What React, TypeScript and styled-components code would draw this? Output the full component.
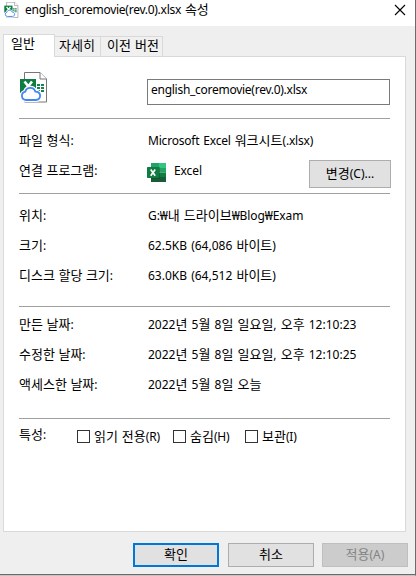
import React from "react";
import styled, { createGlobalStyle, css } from "styled-components";

const GlobalStyle = createGlobalStyle`
  * { box-sizing: border-box; }
  body { margin: 0; background: #f0f0f0; }
`;

const Dialog = styled.main`
  display: flex;
  flex-direction: column;
  width: 416px;
  height: 576px;
  overflow: hidden;
  background: #efefef;
  border-right: 1px solid #6b6b6b;
  border-bottom: 1px solid #c4c4c4;
  box-shadow: inset 0 -1px 0 #6b6b6b;
  color: #000;
  font: 12px/20px "Noto Sans", "Noto Sans CJK KR", sans-serif;
  word-spacing: 1px;
`;

const Line = styled.span<{ $track?: number }>`
  display: block;
  height: 20px;
  line-height: 20px;
  white-space: pre;
  letter-spacing: ${(p) => p.$track ?? 0}px;
`;

const Hangul = styled.span`
  font-family: "Noto Sans CJK KR", sans-serif;
  font-size: 13px;
  line-height: 1px;
  letter-spacing: 0;
`;

function Text({ children, track }: { children: string; track?: number }) {
  return (
    <Line $track={track}>
      {children.split(/([\uac00-\ud7a3]+)/).map((part, i) =>
        i % 2 ? <Hangul key={i}>{part}</Hangul> : part
      )}
    </Line>
  );
}

const TitleBar = styled.header`
  display: flex;
  align-items: flex-start;
  height: 26px;
  padding: 0 9px 0 4px;
  background: #fff;
`;

const TitleIcon = styled.div`
  height: 17px;
  margin-top: 2px;
`;

const TitleText = styled.div`
  flex: 1;
  padding-left: 6px;
`;

const CloseButton = styled.button`
  width: 12px;
  height: 12px;
  margin-top: 4px;
  padding: 0;
  border: 0;
  background: none;
`;

const Icon = styled.svg`
  display: block;
`;

const Tabs = styled.nav`
  display: flex;
  align-items: flex-end;
  height: 31px;
  padding-left: 3px;
`;

const Tab = styled.div<{ $width: number; $pad: number; $active?: boolean }>`
  width: ${(p) => p.$width}px;
  height: 21px;
  padding-left: ${(p) => p.$pad}px;
  border: 1px solid #d9d9d9;
  border-left: 0;
  background: #f0f0f0;
  ${(p) =>
    p.$active &&
    css`
      height: 23px;
      border-left: 1px solid #d9d9d9;
      border-bottom: 0;
      background: #fff;
    `}
`;

const TabLabel = styled.div`
  margin-top: -1px;
`;

const TabFill = styled.div`
  flex: 1;
  margin-right: 9px;
  border-bottom: 1px solid #d9d9d9;
`;

const Panel = styled.section`
  width: 403px;
  height: 475px;
  margin-left: 3px;
  padding: 0 15px;
  border: 1px solid #d9d9d9;
  border-top: 0;
  background: #fff;
`;

const Heading = styled.div`
  display: flex;
  align-items: flex-start;
  height: 61px;
  padding-top: 14px;
`;

const FileIconBox = styled.div`
  width: 128px;
  height: 32px;
  padding: 1px 0 0 1px;
`;

const NameField = styled.div`
  width: 243px;
  height: 26px;
  margin-top: 8px;
  padding-left: 3px;
  border: 1px solid #7a7a7a;
`;

const Group = styled.div<{ $height: number; $top: number }>`
  height: ${(p) => p.$height}px;
  width: 371px;
  padding-top: ${(p) => p.$top}px;
  border-top: 1px solid #a0a0a0;
`;

const Row = styled.div`
  display: flex;
  height: 30px;
`;

const Label = styled.div<{ $width?: number }>`
  flex: none;
  width: ${(p) => p.$width ?? 129}px;
  word-spacing: 0.4px;
`;

const AppIcon = styled.div`
  width: 27px;
  height: 20px;
  margin: 2px 0 0 -1px;
`;

const AppName = styled.div`
  flex: 1;
`;

const Button = styled.button<{ $primary?: boolean; $w?: number; $h?: number }>`
  display: flex;
  flex: none;
  align-items: center;
  justify-content: center;
  width: ${(p) => p.$w ?? 86}px;
  height: ${(p) => p.$h ?? 24}px;
  padding: 0;
  border: ${(p) => (p.$primary ? "2px solid #0078d7" : "1px solid #adadad")};
  background: #e1e1e1;
  color: #000;
  font: inherit;
  word-spacing: inherit;
  &:disabled {
    border-color: #bfbfbf;
    background: #ccc;
    color: #838383;
  }
`;

const ChangeSlot = styled.div`
  margin: -1px -1px 0 0;
`;

const Option = styled.div<{ $width: number }>`
  display: flex;
  width: ${(p) => p.$width}px;
  padding-top: 2px;
`;

const CheckBox = styled.span`
  width: 13px;
  height: 13px;
  margin: 3px 4px 0 0;
  border: 1px solid #333;
  background: #fff;
`;

const Footer = styled.footer`
  display: flex;
  justify-content: flex-end;
  padding: 11px 7px 0 0;
  gap: 8px;
`;

const PrimarySlot = styled.div`
  margin-right: 1px;
`;

function DriveSheetIcon({ width, height }: { width: number; height: number }) {
  return (
    <Icon width={width} height={height} viewBox="0 0 28 31">
      <path d="M4.5.5H20l6.5 6.5v23h-22z" fill="#fff" stroke="#777" strokeWidth="1" />
      <path d="M20 .5V7h6.5" fill="#fff" stroke="#777" strokeWidth="1" />
      <path d="M17 12h3v2h-3zM21 12h3v2h-3zM17 15h3v2h-3zM21 15h3v2h-3zM17 18h3v2h-3zM21 18h3v2h-3z" fill="#16834b" />
      <path d="M0 7h16v14H0z" fill="#107c41" />
      <path d="m4.5 9.5 7.5 9.5M12 9.5l-7.5 9.5" stroke="#fff" strokeWidth="2.6" />
      <path d="M5.8 28a4.2 4.2 0 0 1-.5-8.3c1.1-5 8.6-5.2 10-.1 6.2-.3 6.5 8.2.4 8.4z" fill="#fff" stroke="#fff" strokeWidth="4" />
      <path d="M5.8 28a4.2 4.2 0 0 1-.5-8.3c1.1-5 8.6-5.2 10-.1 6.2-.3 6.5 8.2.4 8.4z" fill="#fff" stroke="#4285f4" strokeWidth="1.8" />
    </Icon>
  );
}

function ExcelIcon() {
  return (
    <Icon width="19" height="19" viewBox="0 0 19 19">
      <path d="M4 0h8v5H4z" fill="#21a366" />
      <path d="M12 0h7v5h-7z" fill="#33c481" />
      <path d="M4 5h8v4.5H4z" fill="#107c41" />
      <path d="M12 5h7v4.5h-7z" fill="#21a366" />
      <path d="M4 9.5h8V19H4z" fill="#185c37" />
      <path d="M12 9.5h7V14h-7z" fill="#107c41" />
      <path d="M12 14h7v5h-7z" fill="#185c37" />
      <path d="M4 4h9v12H4z" fill="#0b3d25" opacity=".35" />
      <rect y="4" width="12" height="11" rx=".7" fill="#107c41" />
      <path d="m3.7 6.4 4.5 6.4M8.2 6.4l-4.5 6.4" stroke="#fff" strokeWidth="1.7" />
    </Icon>
  );
}

const sizes: [string, string, number][] = [
  ["위치:", "G:₩내 드라이브₩Blog₩Exam", -0.08],
  ["크기:", "62.5KB (64,086 바이트)", 0],
  ["디스크 할당 크기:", "63.0KB (64,512 바이트)", 0],
];

const dates: [string, string, number][] = [
  ["만든 날짜:", "2022년 5월 8일 일요일, 오후 12:10:23", 0],
  ["수정한 날짜:", "2022년 5월 8일 일요일, 오후 12:10:25", 0],
  ["액세스한 날짜:", "2022년 5월 8일 오늘", 0],
];

const InfoRows = ({ rows }: { rows: [string, string, number][] }) => (
  <>
    {rows.map(([label, value, track]) => (
      <Row key={label}>
        <Label><Text>{label}</Text></Label>
        <Text track={track}>{value}</Text>
      </Row>
    ))}
  </>
);

export default function App() {
  return (
    <>
      <GlobalStyle />
      <Dialog>
        <TitleBar>
          <TitleIcon><DriveSheetIcon width={15} height={16} /></TitleIcon>
          <TitleText><Text track={-0.27}>english_coremovie(rev.0).xlsx 속성</Text></TitleText>
          <CloseButton aria-label="닫기">
            <Icon width="12" height="12" viewBox="0 0 12 12">
              <path d="m1 1 10 10M11 1 1 11" stroke="#000" strokeWidth="1.1" />
            </Icon>
          </CloseButton>
        </TitleBar>
        <Tabs>
          <Tab $width={52} $pad={7} $active><TabLabel><Text>일반</Text></TabLabel></Tab>
          <Tab $width={46} $pad={4}><TabLabel><Text>자세히</Text></TabLabel></Tab>
          <Tab $width={62} $pad={6}><TabLabel><Text>이전 버전</Text></TabLabel></Tab>
          <TabFill />
        </Tabs>
        <Panel>
          <Heading>
            <FileIconBox><DriveSheetIcon width={28} height={31} /></FileIconBox>
            <NameField><Text track={-0.27}>english_coremovie(rev.0).xlsx</Text></NameField>
          </Heading>
          <Group $height={75} $top={12}>
            <Row>
              <Label><Text>파일 형식:</Text></Label>
              <Text track={-0.2}>Microsoft Excel 워크시트(.xlsx)</Text>
            </Row>
            <Row>
              <Label><Text>연결 프로그램:</Text></Label>
              <AppIcon><ExcelIcon /></AppIcon>
              <AppName><Text track={-0.1}>Excel</Text></AppName>
              <ChangeSlot>
                <Button $w={82} $h={28}><Text>변경(C)...</Text></Button>
              </ChangeSlot>
            </Row>
          </Group>
          <Group $height={113} $top={12}><InfoRows rows={sizes} /></Group>
          <Group $height={112} $top={8}><InfoRows rows={dates} /></Group>
          <Group $height={60} $top={6}>
            <Row>
              <Label $width={58}><Text>특성:</Text></Label>
              <Option $width={96}><CheckBox /><Text track={-0.2}>읽기 전용(R)</Text></Option>
              <Option $width={72}><CheckBox /><Text track={-0.2}>숨김(H)</Text></Option>
              <Option $width={72}><CheckBox /><Text track={-0.2}>보관(I)</Text></Option>
            </Row>
          </Group>
        </Panel>
        <Footer>
          <PrimarySlot><Button $primary><Text>확인</Text></Button></PrimarySlot>
          <Button><Text>취소</Text></Button>
          <Button disabled><Text>적용(A)</Text></Button>
        </Footer>
      </Dialog>
    </>
  );
}
